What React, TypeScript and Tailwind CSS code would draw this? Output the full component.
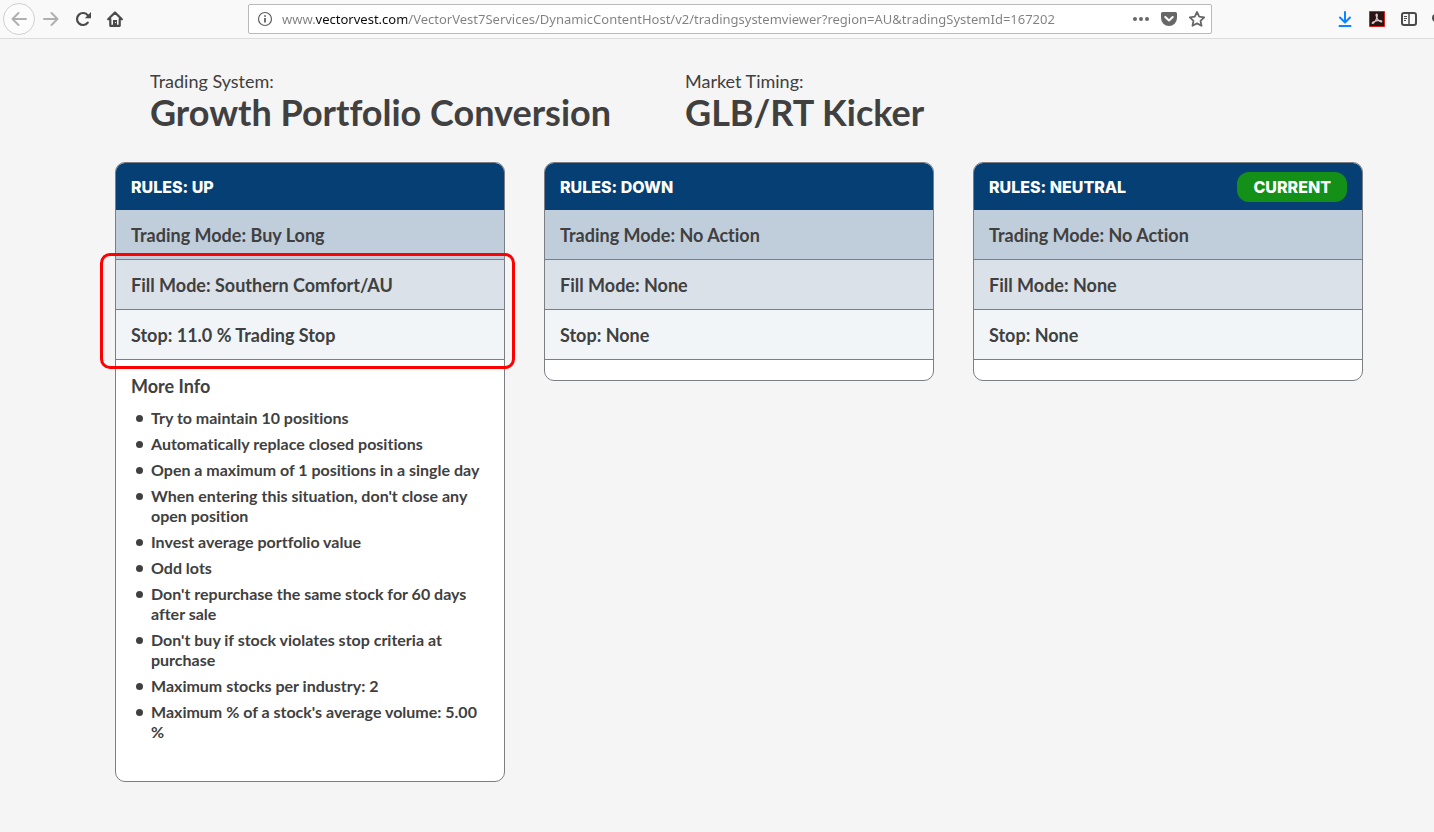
import type { ReactNode } from 'react'

interface RuleSet {
  title: string
  current?: boolean
  mode: string
  fill: string
  stop: string
  highlight?: boolean
  info?: string[]
}

const RULES: RuleSet[] = [
  {
    title: 'RULES: UP',
    mode: 'Buy Long',
    fill: 'Southern Comfort/AU',
    stop: '11.0 % Trading Stop',
    highlight: true,
    info: [
      'Try to maintain 10 positions',
      'Automatically replace closed positions',
      'Open a maximum of 1 positions in a single day',
      "When entering this situation, don't close any open position",
      'Invest average portfolio value',
      'Odd lots',
      "Don't repurchase the same stock for 60 days after sale",
      "Don't buy if stock violates stop criteria at purchase",
      'Maximum stocks per industry: 2',
      "Maximum % of a stock's average volume: 5.00 %",
    ],
  },
  { title: 'RULES: DOWN', mode: 'No Action', fill: 'None', stop: 'None' },
  { title: 'RULES: NEUTRAL', current: true, mode: 'No Action', fill: 'None', stop: 'None' },
]

const ADDRESS =
  'www.vectorvest.com/VectorVest7Services/DynamicContentHost/v2/tradingsystemviewer?region=AU&tradingSystemId=167202'

function ToolButton({ label, children }: { label: string; children: ReactNode }) {
  return (
    <button type="button" aria-label={label} className="grid h-8 w-8 flex-none place-items-center">
      {children}
    </button>
  )
}

function Toolbar() {
  return (
    <header className="flex h-[39px] items-center overflow-hidden border-b border-[#dcdcdc] bg-[#f9f9fa] text-[#4a4a4b]">
      <div className="flex w-[248px] flex-none items-center pl-[3px]">
        <button
          type="button"
          aria-label="Back"
          className="grid h-8 w-8 flex-none place-items-center rounded-full border border-[#d0d0d1] bg-[#fcfcfc] text-[#b0b0b1]"
        >
          <svg viewBox="0 0 16 16" className="h-4 w-4" fill="none" stroke="currentColor" strokeWidth="2" strokeLinecap="round" strokeLinejoin="round">
            <path d="M15 8H2M7.500 2 1.500 8l6 6" />
          </svg>
        </button>
        <div className="flex text-[#b0b0b1]">
          <ToolButton label="Forward">
            <svg viewBox="0 0 16 16" className="h-4 w-4" fill="none" stroke="currentColor" strokeWidth="2" strokeLinecap="round" strokeLinejoin="round">
              <path d="M1 8h13M8.500 2l6 6-6 6" />
            </svg>
          </ToolButton>
        </div>
        <ToolButton label="Reload">
          <svg viewBox="0 0 16 16" className="h-4 w-4" fill="none" stroke="currentColor" strokeWidth="2.200">
            <path d="M12.800 11.600A6 6 0 1 1 12.800 4.400" strokeLinecap="round" />
            <path d="M16 1v6.200H9.800z" fill="currentColor" stroke="none" />
          </svg>
        </ToolButton>
        <ToolButton label="Home">
          <svg viewBox="0 0 16 16" className="h-4 w-4" fill="none" stroke="currentColor" strokeWidth="2.200" strokeLinecap="round" strokeLinejoin="round">
            <path d="M1.200 8.300 8 1.500l6.800 6.800M3.300 8v6.800h9.400V8" />
            <path d="M6 9h4v6H6z" fill="currentColor" stroke="none" />
            <path d="M8 11h1v1H8z" fill="#f9f9fa" stroke="none" />
          </svg>
        </ToolButton>
      </div>

      <div className="flex h-[30px] min-w-0 flex-1 items-center rounded-[2px] border border-[#b9b9bb] bg-white pr-1.5 pl-2">
        <svg viewBox="0 0 16 16" className="h-4 w-4 flex-none" fill="none" stroke="#5f5f60">
          <circle cx="8" cy="8" r="6.500" strokeWidth="1.200" />
          <path d="M8 7v4.500M8 4.200v1.600" strokeWidth="1.800" />
        </svg>
        {/* the domain part is picked out in a darker tone than the rest */}
        <input
          aria-label="Address"
          defaultValue={ADDRESS}
          className="ml-[9px] min-w-0 flex-1 bg-[linear-gradient(to_right,#808080_33px,#0c0c0d_33px,#0c0c0d_125px,#808080_125px)] bg-clip-text pt-0.5 font-['Noto_Sans',sans-serif] text-[13px] text-transparent outline-none"
        />
        <div className="flex flex-none items-center gap-3 text-[#676768]">
          <button type="button" aria-label="Page actions">
            <svg viewBox="0 0 16 16" className="h-4 w-4" fill="currentColor">
              <circle cx="2" cy="8" r="2" />
              <circle cx="8" cy="8" r="2" />
              <circle cx="14" cy="8" r="2" />
            </svg>
          </button>
          <button type="button" aria-label="Save to Pocket">
            <svg viewBox="0 0 16 16" className="h-4 w-4">
              <path d="M1.500 1h13A1.500 1.500 0 0 1 16 2.500V7A8 8 0 0 1 0 7V2.500A1.500 1.500 0 0 1 1.500 1z" fill="currentColor" />
              <path d="M4.300 6 8 9.500 11.700 6" fill="none" stroke="#fff" strokeWidth="2" strokeLinecap="round" strokeLinejoin="round" />
            </svg>
          </button>
          <button type="button" aria-label="Bookmark">
            <svg viewBox="0 0 16 16" className="h-4 w-4" fill="none" stroke="currentColor" strokeWidth="1.800" strokeLinejoin="round">
              <path d="m8 1 2.200 4.700 5 .6-3.700 3.500 1 5L8 12.400l-4.500 2.400 1-5L.8 6.300l5-.6z" />
            </svg>
          </button>
        </div>
      </div>

      <div className="flex w-[222px] flex-none items-center justify-end">
        <ToolButton label="Downloads">
          <svg viewBox="0 0 16 16" className="h-4 w-4" fill="none" stroke="#0a84ff" strokeWidth="2" strokeLinecap="round" strokeLinejoin="round">
            <path d="M8 1v10M3 6.500l5 5 5-5M2.500 15h11" />
          </svg>
        </ToolButton>
        <ToolButton label="Adobe Acrobat">
          <svg viewBox="0 0 16 16" className="h-4 w-4">
            <path d="M.5.5h15v15H.5z" fill="#2b1414" stroke="#d8201a" />
            <path
              d="M7.500 3c1.300 0 .8 3-.4 5.500S4 13 3.300 12.300s2.500-2.300 5-2.600 4.700-.1 4.500.9-3-.3-4.300-2.500S6.600 3 7.500 3z"
              fill="none"
              stroke="#d5c9c9"
              strokeWidth="1.200"
            />
          </svg>
        </ToolButton>
        <ToolButton label="Sidebars">
          <svg viewBox="0 0 16 16" className="h-4 w-4" fill="none" stroke="currentColor">
            <rect x="1" y="2" width="14" height="12" rx="2" strokeWidth="2" />
            <path d="M8 2v12" strokeWidth="1.500" />
            <path d="M3 5.500h3M3 7.500h3M3 9.500h2" strokeWidth="1" />
          </svg>
        </ToolButton>
        <div className="flex w-[9px] flex-none overflow-hidden">
          <svg viewBox="0 0 16 16" className="ml-[7px] h-4 w-4 flex-none" fill="currentColor">
            <circle cx="4" cy="7" r="4" />
          </svg>
        </div>
      </div>
    </header>
  )
}

function Heading({ label, value }: { label: string; value: string }) {
  return (
    <div>
      <p className="text-lg leading-[22px]">{label}</p>
      <h1 className="text-4xl leading-10 font-bold">{value}</h1>
    </div>
  )
}

function RuleCard({ rule }: { rule: RuleSet }) {
  return (
    <section className="rounded-[10px] border border-[#7b7f83] bg-white pb-5">
      <div className="flex h-[47px] items-center justify-between rounded-t-[9px] bg-[#053f74] px-[15px] font-['Inter',sans-serif] font-extrabold text-white">
        <h2>{rule.title}</h2>
        {rule.current && <span className="rounded-xl bg-[#148f17] px-4 py-[3px]">CURRENT</span>}
      </div>
      <div className="text-lg font-bold">
        <p className="flex h-[50px] items-center border-b border-[#7b7f83] bg-[#c0cddb] px-[15px]">
          Trading Mode: {rule.mode}
        </p>
        <div className="relative">
          <p className="flex h-[50px] items-center border-b border-[#7b7f83] bg-[#dae1e9] px-[15px]">
            Fill Mode: {rule.fill}
          </p>
          <p className="flex h-[50px] items-center border-b border-[#7b7f83] bg-[#f1f5f8] px-[15px]">
            Stop: {rule.stop}
          </p>
          {rule.highlight && (
            <div className="absolute -top-[7px] -right-[11px] -bottom-[9px] -left-4 rounded-[10px] border-3 border-[#fe0000]" />
          )}
        </div>
      </div>
      {rule.info && (
        <div className="px-[15px] pt-3 pb-[19px] font-bold">
          <h3 className="text-lg leading-7">More Info</h3>
          <ul className="mt-2 flex flex-col gap-1.5 pl-[5px] leading-5">
            {rule.info.map((line) => (
              <li
                key={line}
                className="flex gap-2 before:mt-[7px] before:size-[7px] before:flex-none before:rounded-full before:bg-current before:content-['']"
              >
                {line}
              </li>
            ))}
          </ul>
        </div>
      )}
    </section>
  )
}

export default function App() {
  return (
    <div className="min-h-screen bg-[#f5f5f5] font-['Lato',sans-serif] text-[#404040] [font-variant-ligatures:none]">
      <Toolbar />
      <main className="pt-[31px] pr-[71px] pb-12 pl-[115px]">
        <div className="flex gap-[74px] pl-[35px]">
          <Heading label="Trading System:" value="Growth Portfolio Conversion" />
          <Heading label="Market Timing:" value="GLB/RT Kicker" />
        </div>
        <div className="mt-[30px] grid grid-cols-3 items-start gap-[39px]">
          {RULES.map((rule) => (
            <RuleCard key={rule.title} rule={rule} />
          ))}
        </div>
      </main>
    </div>
  )
}
